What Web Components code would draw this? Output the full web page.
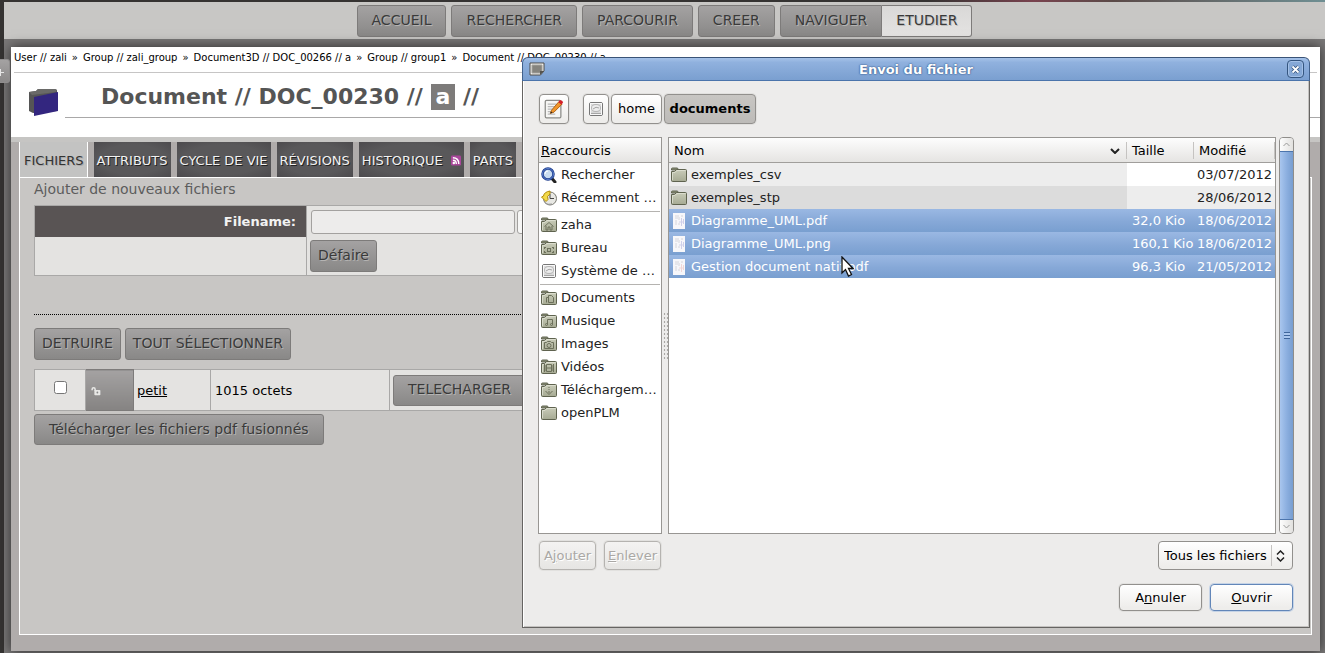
<!DOCTYPE html>
<html lang="fr">
<head>
<meta charset="utf-8">
<title>Document // DOC_00230 // a</title>
<style>
html{height:100%}
body{margin:0;min-height:100%;display:flex;background:#353332;font:13px/16px "DejaVu Sans",Verdana,sans-serif;color:#000}
plm-app{flex:1}
</style>
</head>
<body>
<plm-app></plm-app>
<script>
const define = (name, css, html) => customElements.define(name, class extends HTMLElement {
  constructor() {
    super();
    const t = document.createElement('template');
    t.innerHTML = `<style>*{box-sizing:border-box}${css}</style>` + (typeof html === 'function' ? html(this) : html);
    this.attachShadow({mode: 'open'}).append(t.content.cloneNode(true));
  }
});

/* ---------- icons ---------- */
const folder = inner => `<defs><linearGradient id="f" x2="0" y2="1"><stop stop-color="#c9ccb9"/><stop offset="1" stop-color="#a6aa93"/></linearGradient></defs>
<path d="M.5 3V2q0-1 1-1H6q1 0 1 1v1z" fill="#8b9079" stroke="#5f634f"/>
<path d="M.5 13.5V4.5h3l2-2h9q1 0 1 1v10q0 1-1 1h-13q-1 0-1-1z" fill="url(#f)" stroke="#5f634f"/>
<path d="M1.500 13V5.500H4l2-2h8.500" fill="none" stroke="#e0e2d4" opacity=".8"/>
<g fill="none" stroke="#6c705b">${inner}</g>`;
const paper = c => `<path d="M2 0h12v16H2z" fill="#f7f7fa"/><path d="M4 3h4M4 5h3M5 7v5M7 11h2M8 4v3M10 3h2" stroke="#d6d6dc" fill="none"/><path d="M10.500 5v8M12.500 6v5M8 9h4" stroke="${c}" fill="none"/>`;
const icons = {
  folder: folder(''),
  home: folder('<path d="M3.500 9.500l4.500-4 4.500 4M5 9v4h2v-3h2v3h2V9"/>'),
  desk: folder('<path d="M3 7.500h2M11 7.500h2M3 12.500h2M11 12.500h2M3.500 7v2M12.500 7v2M3.500 11v2M12.500 11v2"/><rect x="6.500" y="8.500" width="3" height="3"/>'),
  docs: folder('<path d="M5.500 12.500v-5h2M7.500 5.500h3l2 2v5h-5z"/>'),
  music: folder('<path d="M6.500 11.500v-5h5v5"/><circle cx="5.500" cy="11.500" r="1"/><circle cx="10.500" cy="11.500" r="1"/>'),
  image: folder('<path d="M3.500 6.500h2l1-1h3l1 1h2v6h-9z"/><circle cx="8" cy="9.500" r="2"/>'),
  video: folder('<path d="M3.500 5v8M12.500 5v8M5.500 5.500h5v7h-5zM6 9h4"/><path d="M4 7h1M4 9h1M4 11h1M11 7h1M11 9h1M11 11h1"/>'),
  down: folder('<path d="M8 5v1M8 7v1M8 9v2M4.500 9l3.500 3.500L11.500 9"/>'),
  search: '<path d="M10.500 11l3.500 4" stroke="#222" stroke-width="3" stroke-linecap="round"/><circle cx="7" cy="7" r="5.500" fill="#c9dcf0" stroke="#1d3c8c" stroke-width="2.500"/><circle cx="7" cy="7" r="5.500" fill="none" stroke="#5b80cc"/><path d="M4 7q0-3 3-3" stroke="#fff" fill="none"/>',
  recent: '<circle cx="9" cy="8.500" r="6.500" fill="#e8e8e4" stroke="#77776f"/><path d="M9 4v4.500h4" fill="none" stroke="#444"/><path d="M.5 7L5 11.500 7 9.500Q5 6 9 4V1Q3 2 2.500 6z" fill="#f3da48" stroke="#b38d0c"/><path d="M4 13q3 2 7 1" stroke="#999" fill="none"/>',
  disk: '<rect x="1.500" y="1.500" width="13" height="13" rx="1.500" fill="#d9d9d9" stroke="#777"/><rect x="2.500" y="2.500" width="11" height="11" fill="none" stroke="#f8f8f8"/><ellipse cx="8" cy="7" rx="4.500" ry="3.500" fill="#ececec" stroke="#b5b5b5"/><path d="M5 8q3-3 6-1M3 12.500h10" stroke="#a5a5a5" fill="none"/>',
  uml: paper('#cfd0ea'),
  pdf: paper('#f1d6d6'),
  edit: '<rect x="1" y="1" width="12.500" height="14" rx="1" fill="#f6f6f4" stroke="#8b8b88"/><path d="M3 4h7M3 6h7M3 8h5M3 10h4M3 12h6" stroke="#b9b9b9"/><path d="M5 11.500L6 9l6-7 2.500 2L8 10.500z" fill="#f0962c" stroke="#a65a0c" stroke-width=".7"/><path d="M11.500 2.500l1-1.500q2-.5 2.800 1.500L14 4.500z" fill="#d4202a"/><path d="M5 11.500l.7-1.500 1 1z" fill="#222"/>',
  window: '<path d="M1 2h14v8l-3.500 4H1z" fill="#f1f1ee" stroke="#4f4d49"/><path d="M3 4h10v6l-2 2H3z" fill="#85847e" stroke="#a3a19b"/><path d="M11 14l4-4h-4z" fill="#55534e"/>',
  lock: '<path d="M1.500 7V5.500q0-2 2-2t2 2V8" fill="none" stroke="#e8e8e6" stroke-width="2"/><rect x="4.500" y="6.500" width="8" height="7" rx="1" fill="#e8e8e6"/><circle cx="8.500" cy="10" r="1.200" fill="#888"/>',
  rss: '<rect width="16" height="16" rx="2" fill="#a9469b"/><circle cx="4.500" cy="12" r="2" fill="#fff"/><path d="M3 7.500q5.500 0 5.500 6M3 3.500q9.500 0 9.500 10" stroke="#fff" stroke-width="2.200" fill="none"/>',
  logo: '<path d="M1 6l7-1 2-2h17l2 1v21l-24 2-4-2z" fill="#555"/><path d="M1 6l7-1 2-2h17l2 1-1 2-24 3z" fill="#6a6a68"/><path d="M6 11L30 6v19L6 30z" fill="#33267f"/>'
};
define('plm-icon', ':host{display:inline-block;width:16px;height:16px;flex:none}svg{display:block;width:100%;height:100%}',
  el => `<svg viewBox="0 0 ${el.getAttribute('name') === 'logo' ? '31 31' : '16 16'}" aria-hidden="true">${icons[el.getAttribute('name')]}</svg>`);

/* ---------- PLM page ---------- */
define('plm-button', `:host{display:block}
button{display:block;width:100%;height:var(--height,32px);margin:0;padding:0 var(--pad,14px) 2px;border:1px solid #7d7b7a;border-radius:3px;background:linear-gradient(#a4a2a2,#898887);font:14px/16px "DejaVu Sans",sans-serif;color:#3a3a3a;text-shadow:1px 1px #b5b4b3;white-space:nowrap}
:host([current]) button{background:linear-gradient(#d9d8d7,#e4e3e2);border-radius:0 3px 3px 0;border-left:0;text-shadow:1px 1px #bbb}
:host([joined]) button{border-radius:3px 0 0 3px}`, '<button type="button"><slot></slot></button>');

define('plm-nav', `:host{display:block;background:#c8c7c5}
nav{display:flex;justify-content:center;gap:5px;padding:3px 0 2px}.pair{display:flex}`,
`<nav><plm-button>ACCUEIL</plm-button><plm-button>RECHERCHER</plm-button><plm-button>PARCOURIR</plm-button><plm-button>CREER</plm-button>
<div class="pair"><plm-button joined>NAVIGUER</plm-button><plm-button current>ETUDIER</plm-button></div></nav>`);

define('plm-crumbs', `:host{display:block;margin:0 3px;border-bottom:1px solid #c6c5c5;padding:3px 0 6px}
nav{display:flex;gap:5px;font-size:10px;line-height:16px;white-space:nowrap;overflow:hidden}a{color:#000;text-decoration:none}`,
`<nav><a href="#">User // zali</a><span>»</span><a href="#">Group // zali_group</a><span>»</span><a href="#">Document3D // DOC_00266 // a</a><span>»</span><a href="#">Group // group1</a><span>»</span><a href="#">Document // DOC_00230 // a</a></nav>`);

define('plm-title', `:host{display:flex;align-items:flex-start;padding-bottom:19px}
plm-icon{width:31px;height:31px;margin:13px 6px 0 17px}
h1{flex:1;margin:0;height:45px;padding:11px 0 0 36px;border-bottom:1px solid #a9a8a8;font-size:22px;line-height:26px;color:#555;white-space:nowrap}
b{display:inline-block;background:#7d7b7a;color:#fff;padding:0 5px}`,
`<plm-icon name="logo"></plm-icon><h1>Document // DOC_00230 // <b>a</b> //</h1>`);

define('plm-tab', `:host{display:block}
a{display:flex;align-items:center;gap:8px;height:35px;padding:2px 3px 0;background:radial-gradient(ellipse at center,#59585a 60%,#4c4a4d);color:#f2f2f2;text-decoration:none;text-shadow:1px 1px #222;white-space:nowrap}
:host([current]) a{background:#c3c3c2;border:solid #fff;border-width:0 1px;padding:2px 3px 0 4px;color:#333;text-shadow:1px 1px #aaa}`,
'<a href="#"><slot></slot></a>');
define('plm-tabs', ':host{display:flex;gap:6px;border-top:5px solid #c6c5c3;padding:0 8px}plm-icon{width:10px;height:11px}',
`<plm-tab current>FICHIERS</plm-tab><plm-tab>ATTRIBUTS</plm-tab><plm-tab>CYCLE DE VIE</plm-tab><plm-tab>RÉVISIONS</plm-tab><plm-tab>HISTORIQUE<plm-icon name="rss"></plm-icon></plm-tab><plm-tab>PARTS</plm-tab>`);

define('plm-upload', `:host{display:block}
h2{margin:0 0 8px;font-size:14px;line-height:16px;font-weight:400;color:#5c5c5c}
.form{display:grid;grid-template-columns:271px 1fr;border:1px solid #a9a8a7;background:#e4e3e1}
.form>*{min-height:31px}
label{display:flex;align-items:center;justify-content:flex-end;padding-right:10px;background:#595454;color:#f2f2f2;font-weight:700}
.field{display:flex;align-items:center;gap:2px;padding-left:4px;border-left:1px solid #a9a8a7}
input{width:204px;height:24px;padding:0 4px;border:1px solid #a3a19f;border-radius:3px;background:#edeceb;font:inherit}
.pick{width:90px;height:24px;border:1px solid #a3a19f;border-radius:3px;background:#f6f6f5}
.undo{padding:3px 3px;border-left:1px solid #a9a8a7;display:flex;--pad:7px}`,
`<h2>Ajouter de nouveaux fichiers</h2>
<div class="form"><label for="fn">Filename:</label><div class="field"><input id="fn" type="text"><button class="pick" type="button" aria-label="Parcourir"></button></div>
<div></div><div class="undo"><plm-button>Défaire</plm-button></div></div>`);

define('plm-documents', `:host{display:block}
.bar{display:flex;gap:4px;--pad:7px;margin-bottom:9px}
table{width:100%;border-collapse:collapse;table-layout:fixed;background:#e4e3e1}
td{height:41px;padding:2px 4px 0;border:1px solid #a9a8a7}
td.check{text-align:center;vertical-align:middle;padding:0}
input{display:block;width:13px;height:13px;margin:0 auto 5px 19px}
td.lock{background:linear-gradient(#a4a2a2,#858382);padding:2px 5px 0;border-color:#7d7b7a}
plm-icon{width:12px;height:12px;display:block}
td.name{padding-left:3px}
td.dl{padding:0 3px;--height:31px}
a{color:#000}.row,.join{display:flex}.join{margin-top:3px;--height:31px}`,
`<div class="bar"><plm-button>DETRUIRE</plm-button><plm-button>TOUT SÉLECTIONNER</plm-button></div>
<table><colgroup><col style="width:51px"><col style="width:48px"><col style="width:77px"><col style="width:179px"><col></colgroup>
<tr><td class="check"><input type="checkbox" aria-label="petit"></td><td class="lock"><plm-icon name="lock"></plm-icon></td><td class="name"><a href="#">petit</a></td><td>1015 octets</td><td class="dl"><div class="row"><plm-button>TELECHARGER</plm-button></div></td></tr></table>
<div class="join"><plm-button>Télécharger les fichiers pdf fusionnés</plm-button></div>`);

define('plm-content', `:host{display:block;margin:0 8px 16px;padding:3px 14px;border:1px solid #fff;background:#c8c6c4}
hr{margin:38px 0 13px;border:0;border-top:1px dotted #000}`,
`<plm-upload></plm-upload><hr><plm-documents></plm-documents>`);

define('plm-app', `:host{display:flex;flex-direction:column;position:relative;padding:2px 0 0 4px;background:linear-gradient(90deg,#353332 4px,#7a7878 4px);overflow:hidden}
:host::before{content:"";position:absolute;inset:0 0 auto;height:2px;background:linear-gradient(90deg,#353332 70%,#79434f 78%,#5b4a48 84%,#6f8f93)}
main{flex:1;display:flex;flex-direction:column;margin:8px 5px 2px 7px;background:#b0acab;box-shadow:0 0 12px rgba(0,0,0,.65)}
.head{background:#fff}
plm-content{flex:1}
.more{position:absolute;left:0;top:59px;width:10px;height:24px;padding:0;border:1px solid #8f8d8d;border-left:0;border-radius:0 3px 3px 0;background:linear-gradient(#a4a2a2,#8b8989)}
.more svg{display:block;width:9px;height:9px;margin-top:3px}
file-dialog{position:absolute;right:15px;top:57px;width:788px}
.cursor{position:absolute;right:471px;top:256px;width:14px;height:22px}`,
`<plm-nav></plm-nav>
<main><div class="head"><plm-crumbs></plm-crumbs><plm-title></plm-title></div><plm-tabs></plm-tabs><plm-content></plm-content></main>
<button class="more" type="button" aria-label="Ouvrir le panneau"><svg viewBox="0 0 9 9"><path d="M0 4.500h4M.5 1v7" stroke="#e6e6e6"/></svg></button>
<file-dialog></file-dialog>
<svg class="cursor" viewBox="0 0 14 22" aria-hidden="true"><path d="M2 1v16l3.500-3.500L8.500 20l3-1.500-3-6H13z" fill="#fff" stroke="#111" stroke-width="1.300"/></svg>`);

/* ---------- file chooser ---------- */
define('gtk-button', `:host{display:block}
button{display:flex;align-items:center;justify-content:center;width:100%;height:var(--height,30px);margin:0;padding:0 5px;border:1px solid #92908d;border-radius:4px;background:linear-gradient(#fff,#eeedeb 90%);font:13px/16px "DejaVu Sans",sans-serif;color:#000;white-space:nowrap;box-shadow:0 0 0 1px #e2e1df}
:host([pressed]) button{background:linear-gradient(#c8c6c3,#bdbbb8);font-weight:700}
:host([off]) button{border-color:#b5b3b0;background:linear-gradient(#f4f3f2,#e6e5e3);color:#aaa8a5;text-shadow:1px 1px #fff}
:host([primary]) button{border-color:#6286b8;box-shadow:0 0 0 1px #c5d3e6}`,
el => `<button type="button"${el.hasAttribute('off') ? ' disabled' : ''}><slot></slot></button>`);

define('gtk-titlebar', `:host{display:flex;align-items:center;height:24px;padding:0 5px 0 6px;border:1px solid #41618c;border-top-color:#3a5377;border-bottom-color:#4b74ab;border-radius:6px 6px 0 0;background:linear-gradient(#a5c2e9,#90b1de 20%,#7a9fd0);color:#fff;font-weight:700}
h2{flex:1;margin:0;padding-top:2px;font-size:13px;line-height:16px;text-align:center;text-shadow:0 0 2px #2d5286,0 0 1px #2d5286}
plm-icon{height:16px}
button{width:17px;height:18px;padding:0;border:1px solid #34557f;border-radius:4px;background:#85a8d6;box-shadow:inset 0 0 0 1px #a3c0e6}
svg{display:block;margin:auto;width:9px;height:9px}`,
`<plm-icon name="window"></plm-icon><h2>Envoi du fichier</h2><button type="button" aria-label="Fermer"><svg viewBox="0 0 9 9"><path d="M1.500 1.500l6 6M7.500 1.500l-6 6" stroke="#34557f" stroke-width="3.400"/><path d="M1.500 1.500l6 6M7.500 1.500l-6 6" stroke="#fff" stroke-width="1.800"/></svg></button>`);

define('gtk-shortcut', ':host{display:block}a{display:flex;align-items:center;gap:4px;height:23px;padding-left:2px;color:#222;text-decoration:none;white-space:nowrap}',
el => `<a href="#"><plm-icon name="${el.getAttribute('icon')}"></plm-icon><span><slot></slot></span></a>`);

define('gtk-places', `:host{display:block;width:124px;border:1px solid #989693;background:#fff}
h3{margin:0;height:25px;padding:4px 2px 0;border-bottom:1px solid #a09e9b;background:linear-gradient(#fdfdfd,#e5e4e2);font-size:13px;line-height:17px;font-weight:400}
hr{margin:2px 1px 1px;border:0;border-top:1px solid #b5b3b0}`,
`<h3><u>R</u>accourcis</h3>
<gtk-shortcut icon="search">Rechercher</gtk-shortcut><gtk-shortcut icon="recent">Récemment …</gtk-shortcut><hr>
<gtk-shortcut icon="home">zaha</gtk-shortcut><gtk-shortcut icon="desk">Bureau</gtk-shortcut><gtk-shortcut icon="disk">Système de …</gtk-shortcut><hr>
<gtk-shortcut icon="docs">Documents</gtk-shortcut><gtk-shortcut icon="music">Musique</gtk-shortcut><gtk-shortcut icon="image">Images</gtk-shortcut><gtk-shortcut icon="video">Vidéos</gtk-shortcut><gtk-shortcut icon="down">Téléchargem…</gtk-shortcut><gtk-shortcut icon="folder">openPLM</gtk-shortcut>`);

const files = [
  ['folder', 'exemples_csv', '', '03/07/2012'],
  ['folder', 'exemples_stp', '', '28/06/2012'],
  ['uml', 'Diagramme_UML.pdf', '32,0 Kio', '18/06/2012', 1],
  ['uml', 'Diagramme_UML.png', '160,1 Kio', '18/06/2012', 1],
  ['pdf', 'Gestion document natif.pdf', '96,3 Kio', '21/05/2012', 1]
];
define('gtk-files', `:host{display:block;flex:1;border:1px solid #989693;background:#fff}
table{width:100%;border-collapse:separate;border-spacing:0;table-layout:fixed}
th{height:25px;padding:2px 5px 0;border-bottom:1px solid #a09e9b;background:linear-gradient(90deg,#c5c3c1,#c5c3c1) right center/1px 17px no-repeat,linear-gradient(#fdfdfd,#e5e4e2);font-weight:400;text-align:left}
th>div{display:flex;align-items:center;justify-content:space-between}
th svg{width:10px;height:6px;margin-right:2px}
td{height:23px;padding:0 0 0 5px;color:#222;white-space:nowrap}
td:first-child{padding-left:2px;background:#ededed}
td:last-child{padding:0 3px 0 0;text-align:right}
td>div{display:flex;align-items:center;gap:4px}
tr:nth-child(2) td{background:#ededed}tr:nth-child(2) td:first-child{background:#dcdcdc}
tr.on td{background:linear-gradient(#9ab8e3,#86a8d7 55%,#799fd0);color:#fff}`,
`<table><colgroup><col><col style="width:67px"><col style="width:81px"></colgroup>
<thead><tr><th><div>Nom<svg viewBox="0 0 10 6"><path d="M1 1l4 4 4-4" fill="none" stroke="#222" stroke-width="2"/></svg></div></th><th>Taille</th><th>Modifié</th></tr></thead>
<tbody>${files.map(f => `<tr${f[4] ? ' class="on"' : ''}><td><div><plm-icon name="${f[0]}"></plm-icon>${f[1]}</div></td><td>${f[2]}</td><td>${f[3]}</td></tr>`).join('')}</tbody></table>`);

define('gtk-scrollbar', `:host{display:flex;flex-direction:column;width:15px;margin-left:3px;border:1px solid #8f8d8a;border-radius:4px;background:#eee;overflow:hidden}
button{height:13px;padding:0;border:0;background:linear-gradient(90deg,#fdfdfd,#e2e1df)}
svg{display:block;margin:auto;width:7px;height:5px}
.thumb{flex:1;display:flex;align-items:center;justify-content:center;border:solid #4c75ad;border-width:1px 0;background:linear-gradient(90deg,#a9c6ee,#8db0e0 50%,#779dd0)}
.grip{width:6px;height:7px;background:repeating-linear-gradient(#3f669b 0 1px,#a9c6ee 1px 3px)}`,
`<button type="button" aria-label="Haut"><svg viewBox="0 0 7 5"><path d="M.5 4l3-3 3 3" fill="none" stroke="#999"/></svg></button><div class="thumb"><div class="grip"></div></div><button type="button" aria-label="Bas"><svg viewBox="0 0 7 5"><path d="M.5 1l3 3 3-3" fill="none" stroke="#999"/></svg></button>`);

define('gtk-filter', `:host{display:grid;width:135px}
select,svg{grid-area:1/1}
select{appearance:none;width:100%;height:29px;margin:0;padding:0 24px 0 5px;border:1px solid #92908d;border-radius:4px;background:linear-gradient(#c5c3c1,#c5c3c1) 112px center/1px 21px no-repeat,linear-gradient(#fff,#eeedeb 90%);font:13px/16px "DejaVu Sans",sans-serif;color:#000}
svg{place-self:center end;width:9px;height:12px;margin-right:8px;pointer-events:none}`,
`<select aria-label="Type de fichiers"><option>Tous les fichiers</option></select><svg viewBox="0 0 9 12"><path d="M1 4.500l3.500-3.500L8 4.500M1 7.500L4.500 11 8 7.500" fill="none" stroke="#222" stroke-width="1.500"/></svg>`);

define('file-dialog', `:host{display:block}
.body{padding:13px 15px 16px;border:1px solid #666462;border-top:0;background:#edeceb;box-shadow:inset 1px 0 #fff,inset -1px -1px #c4c2c0}
.path{display:flex;gap:2px;margin-bottom:13px;padding-left:1px}
.path .edit{width:30px;margin-right:12px}.path .root{width:26px}.path .home{width:51px}.path .docs{width:92px}
.path .edit plm-icon{width:20px;height:20px}
.lists{display:flex;height:397px}
.split{width:6px;flex:none;display:flex;align-items:center;justify-content:center}
.split i{width:5px;height:48px;background:radial-gradient(circle,#aaa8a5 40%,transparent 45%) 0 0/3px 4px}
.row{display:flex;justify-content:space-between;margin-top:7px;padding:0 1px;--height:29px}
.set{display:flex;gap:8px}.set gtk-button{width:57px}
.end{display:flex;justify-content:flex-end;gap:8px;margin-top:14px;--height:27px;padding-right:1px}.end gtk-button{width:83px}`,
`<gtk-titlebar></gtk-titlebar><div class="body">
<div class="path"><gtk-button class="edit"><plm-icon name="edit"></plm-icon></gtk-button><gtk-button class="root"><plm-icon name="disk"></plm-icon></gtk-button><gtk-button class="home">home</gtk-button><gtk-button class="docs" pressed>documents</gtk-button></div>
<div class="lists"><gtk-places></gtk-places><div class="split"><i></i></div><gtk-files></gtk-files><gtk-scrollbar></gtk-scrollbar></div>
<div class="row"><div class="set"><gtk-button off>A<u>j</u>outer</gtk-button><gtk-button off><u>E</u>nlever</gtk-button></div><gtk-filter></gtk-filter></div>
<div class="end"><gtk-button>A<u>n</u>nuler</gtk-button><gtk-button primary><u>O</u>uvrir</gtk-button></div>
</div>`);
</script>
</body>
</html>
